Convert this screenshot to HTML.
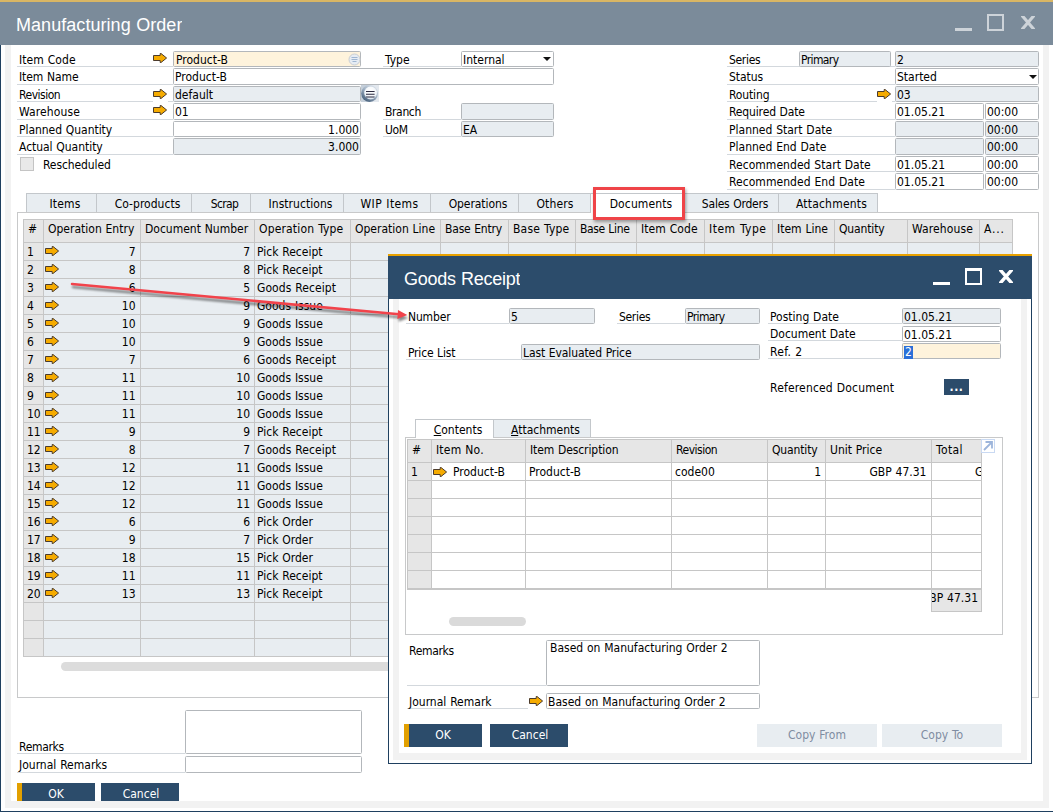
<!DOCTYPE html><html><head><meta charset="utf-8"><title>Manufacturing Order</title><style>
*{box-sizing:border-box;margin:0;padding:0}
html,body{width:1053px;height:812px;overflow:hidden;background:#fff}
body{position:relative;font-family:"DejaVu Sans Condensed","Liberation Sans",sans-serif;font-size:12px;color:#000;word-spacing:0.4px}
.a{position:absolute;white-space:nowrap;overflow:hidden}
.t{position:absolute;z-index:2;white-space:nowrap;line-height:16px;height:16px;padding-top:1px;height:17px}
.f{position:absolute;white-space:nowrap;border:1px solid #b3b7bb;border-radius:1.5px;line-height:14px;padding:1px 1px 0 1px;background:#fff}
.d{background:#e8edf1}
.y{background:#fef3dc}
.r{text-align:right}
.u{position:absolute;height:1px;background:#d3d8dd}
.tab{position:absolute;top:193px;height:19px;line-height:20px;padding-left:7px;text-align:center;background:#e8edf1;border:1px solid #c3c7cb;border-bottom:none;white-space:nowrap}
.btn{position:absolute;background:#2c4c6b;color:#fff;text-align:center;line-height:18px;height:18px;white-space:nowrap;overflow:hidden;padding-top:2px}
.gold{background:linear-gradient(to right,#e2a000 5px,#2c4c6b 5px)}
.hc{position:absolute;background:#e6e6e6;border-right:1px solid #c6c6c6;border-bottom:1px solid #c6c6c6;white-space:nowrap;overflow:hidden;padding-left:4px}
.c{position:absolute;border-right:1px solid #c6c6c6;border-bottom:1px solid #c6c6c6;white-space:nowrap;overflow:hidden;line-height:17px;height:18px;padding-top:1px}
svg{position:absolute;overflow:visible}
.ttl{font-family:"Liberation Sans",sans-serif;font-size:18px;line-height:24px;color:#fff}
</style></head><body>
<div class="a" style="left:0px;top:0px;width:1053px;height:2px;background:#d9b664;"></div>
<div class="a" style="left:0px;top:2px;width:1053px;height:43px;background:#7b8b9a;"></div>
<div class="a ttl" style="left:16px;top:13px;letter-spacing:0.05px">Manufacturing Order</div>
<div class="a" style="left:955px;top:28px;width:17px;height:3px;background:#cdd3d9;"></div>
<div class="a" style="left:987px;top:14px;width:17px;height:17px;border:2px solid #cdd3d9"></div>
<svg style="left:1020.5px;top:16px;overflow:hidden" width="14" height="13" viewBox="0 0 14 13"><path d="M0.5 -1L13.5 14M13.5 -1L0.5 14" stroke="#cdd3d9" stroke-width="3.2" fill="none"/></svg>
<div class="a" style="left:0px;top:45px;width:1px;height:767px;background:#1f4060;"></div>
<div class="a" style="left:0px;top:811px;width:1053px;height:1px;background:#1f4060;"></div>
<div class="a" style="left:5px;top:45px;width:6px;height:763px;background:#f2f2f2;"></div>
<div class="a" style="left:1043px;top:45px;width:6px;height:763px;background:#f2f2f2;"></div>
<div class="a" style="left:5px;top:801px;width:1044px;height:7px;background:#f2f2f2;"></div>
<div class="t" style="left:19px;top:51px;letter-spacing:0.07px;">Item Code</div>
<div class="u" style="left:17px;top:66px;width:156px"></div>
<div class="t" style="left:19px;top:68px;letter-spacing:-0.08px;">Item Name</div>
<div class="u" style="left:17px;top:84px;width:156px"></div>
<div class="t" style="left:19px;top:86px;letter-spacing:-0.48px;">Revision</div>
<div class="u" style="left:17px;top:101px;width:156px"></div>
<div class="t" style="left:19px;top:103px;letter-spacing:0.11px;">Warehouse</div>
<div class="u" style="left:17px;top:119px;width:156px"></div>
<div class="t" style="left:19px;top:121px;letter-spacing:-0.04px;">Planned Quantity</div>
<div class="u" style="left:17px;top:136px;width:156px"></div>
<div class="t" style="left:19px;top:138px;letter-spacing:-0.04px;">Actual Quantity</div>
<div class="u" style="left:17px;top:154px;width:156px"></div>
<div class="f y" style="left:173px;top:51px;width:188px;height:16px;padding-left:2px">Product-B</div>
<div class="f " style="left:173px;top:68px;width:381px;height:17px;">Product-B</div>
<div class="f d" style="left:173px;top:86px;width:188px;height:16px;">default</div>
<div class="f " style="left:173px;top:103px;width:188px;height:17px;">01</div>
<div class="f r" style="left:173px;top:121px;width:188px;height:16px;">1.000</div>
<div class="f d r" style="left:173px;top:138px;width:188px;height:17px;">3.000</div>
<svg style="left:153px;top:53px" width="14" height="10" viewBox="0 0 14 10"><path d="M0.5 2.5H7.2V0.5H8L13.6 5L8 9.5H7.2V7.5H0.5Z" fill="#f5ab00" stroke="#4b3b2c" stroke-width="1" stroke-linejoin="miter"/></svg>
<svg style="left:153px;top:89px" width="14" height="10" viewBox="0 0 14 10"><path d="M0.5 2.5H7.2V0.5H8L13.6 5L8 9.5H7.2V7.5H0.5Z" fill="#f5ab00" stroke="#4b3b2c" stroke-width="1" stroke-linejoin="miter"/></svg>
<svg style="left:153px;top:105px" width="14" height="10" viewBox="0 0 14 10"><path d="M0.5 2.5H7.2V0.5H8L13.6 5L8 9.5H7.2V7.5H0.5Z" fill="#f5ab00" stroke="#4b3b2c" stroke-width="1" stroke-linejoin="miter"/></svg>
<div class="a" style="left:153px;top:101px;width:15px;height:1px;background:#fff;"></div>
<svg style="left:347.5px;top:52.5px" width="13" height="13" viewBox="0 0 13 13"><circle cx="6.5" cy="6.5" r="5.5" fill="#e6ecf3" stroke="#c9cdd2"/><path d="M3.5 4.5H9.5M3.5 6.5H9.5M4.5 8.5H8.5" stroke="#9fb6d2" stroke-width="1"/></svg>
<svg style="left:361px;top:85px" width="18" height="17" viewBox="0 0 18 17"><defs><linearGradient id="g1" x1="0.8" y1="0" x2="0.15" y2="1"><stop offset="0" stop-color="#dfe6ee"/><stop offset="0.45" stop-color="#9fb0c3"/><stop offset="1" stop-color="#38536f"/></linearGradient><radialGradient id="g2" cx="0.5" cy="0.35" r="0.75"><stop offset="0" stop-color="#ffffff"/><stop offset="0.6" stop-color="#f2f6fa"/><stop offset="1" stop-color="#c3d2e2"/></radialGradient></defs><rect x="0" y="0" width="18" height="17" fill="#e3e8ee"/><path d="M0 0H8V17H0Z" fill="#c5cfda"/><circle cx="8.6" cy="8.5" r="8.4" fill="url(#g1)"/><circle cx="9.6" cy="8" r="6.4" fill="url(#g2)"/><path d="M5 6.5H13.6M5 9.3H13.6M5 12H13.6" stroke="#2b2a40" stroke-width="1.05"/></svg>
<div class="a" style="left:20px;top:157px;width:14px;height:14px;background:#e9e9e9;border:1px solid #c4c4c4"></div>
<div class="t" style="left:43px;top:156px;letter-spacing:-0.10px;">Rescheduled</div>
<div class="t" style="left:385px;top:51px;">Type</div>
<div class="u" style="left:383px;top:66px;width:78px"></div>
<div class="f " style="left:461px;top:51px;width:93px;height:16px;">Internal</div>
<svg style="left:543px;top:57px" width="8" height="4" viewBox="0 0 8 4"><path d="M0 0H8L4.0 4Z" fill="#111"/></svg>
<div class="t" style="left:385px;top:103px;letter-spacing:-0.36px;">Branch</div>
<div class="u" style="left:383px;top:119px;width:78px"></div>
<div class="f d" style="left:461px;top:103px;width:93px;height:17px;"></div>
<div class="t" style="left:385px;top:121px;letter-spacing:-0.41px;">UoM</div>
<div class="u" style="left:383px;top:136px;width:78px"></div>
<div class="f d" style="left:461px;top:121px;width:93px;height:16px;">EA</div>
<div class="t" style="left:729px;top:51px;letter-spacing:-0.32px;">Series</div>
<div class="u" style="left:727px;top:66px;width:168px"></div>
<div class="t" style="left:729px;top:68px;letter-spacing:-0.04px;">Status</div>
<div class="u" style="left:727px;top:84px;width:168px"></div>
<div class="t" style="left:729px;top:86px;letter-spacing:-0.14px;">Routing</div>
<div class="u" style="left:727px;top:101px;width:168px"></div>
<div class="t" style="left:729px;top:103px;letter-spacing:-0.14px;">Required Date</div>
<div class="u" style="left:727px;top:119px;width:168px"></div>
<div class="t" style="left:729px;top:121px;">Planned Start Date</div>
<div class="u" style="left:727px;top:136px;width:168px"></div>
<div class="t" style="left:729px;top:138px;">Planned End Date</div>
<div class="u" style="left:727px;top:154px;width:168px"></div>
<div class="t" style="left:729px;top:156px;letter-spacing:0.04px;">Recommended Start Date</div>
<div class="u" style="left:727px;top:171px;width:168px"></div>
<div class="t" style="left:729px;top:173px;letter-spacing:0.05px;">Recommended End Date</div>
<div class="u" style="left:727px;top:189px;width:168px"></div>
<div class="f d" style="left:799px;top:51px;width:92px;height:16px;letter-spacing:-0.60px;">Primary</div>
<div class="f d" style="left:895px;top:51px;width:144px;height:16px;">2</div>
<div class="f " style="left:895px;top:68px;width:144px;height:17px;">Started</div>
<svg style="left:1029px;top:75px" width="8" height="4" viewBox="0 0 8 4"><path d="M0 0H8L4.0 4Z" fill="#111"/></svg>
<div class="f d" style="left:895px;top:86px;width:144px;height:16px;">03</div>
<div class="a" style="left:877px;top:101px;width:15px;height:1px;background:#fff;"></div>
<svg style="left:877px;top:89px" width="14" height="10" viewBox="0 0 14 10"><path d="M0.5 2.5H7.2V0.5H8L13.6 5L8 9.5H7.2V7.5H0.5Z" fill="#f5ab00" stroke="#4b3b2c" stroke-width="1" stroke-linejoin="miter"/></svg>
<div class="f " style="left:895px;top:103px;width:89px;height:17px;">01.05.21</div>
<div class="f " style="left:985px;top:103px;width:54px;height:17px;">00:00</div>
<div class="f d" style="left:895px;top:121px;width:89px;height:16px;"></div>
<div class="f d" style="left:985px;top:121px;width:54px;height:16px;">00:00</div>
<div class="f d" style="left:895px;top:138px;width:89px;height:17px;"></div>
<div class="f d" style="left:985px;top:138px;width:54px;height:17px;">00:00</div>
<div class="f " style="left:895px;top:156px;width:89px;height:16px;">01.05.21</div>
<div class="f " style="left:985px;top:156px;width:54px;height:16px;">00:00</div>
<div class="f " style="left:895px;top:173px;width:89px;height:17px;">01.05.21</div>
<div class="f " style="left:985px;top:173px;width:54px;height:17px;">00:00</div>
<div class="a" style="left:17px;top:212px;width:1022px;height:486px;border:1px solid #c8c9ca;background:#fff"></div>
<div class="tab" style="left:26px;width:71px;letter-spacing:0.15px;">Items</div>
<div class="tab" style="left:96px;width:96px;letter-spacing:0.03px;">Co-products</div>
<div class="tab" style="left:191px;width:60px;letter-spacing:-0.60px;">Scrap</div>
<div class="tab" style="left:250px;width:94px;letter-spacing:0.04px;">Instructions</div>
<div class="tab" style="left:343px;width:88px;letter-spacing:0.41px;padding-left:5px;">WIP Items</div>
<div class="tab" style="left:430px;width:89px;letter-spacing:-0.06px;">Operations</div>
<div class="tab" style="left:518px;width:73px;letter-spacing:0.12px;padding-left:1px;">Others</div>
<div class="tab" style="left:590px;width:95px;letter-spacing:0.12px;background:#fff;height:20px;">Documents</div>
<div class="tab" style="left:684px;width:95px;letter-spacing:-0.21px;">Sales Orders</div>
<div class="tab" style="left:778px;width:100px;letter-spacing:0.21px;">Attachments</div>
<div class="a" style="left:23px;top:219px;width:990px;height:438px;background:#c6c6c6;"></div>
<div class="hc" style="left:24px;top:220px;width:20px;height:23px;line-height:18px;">#</div>
<div class="hc" style="left:44px;top:220px;width:97px;height:23px;line-height:18px;">Operation Entry</div>
<div class="hc" style="left:141px;top:220px;width:114px;height:23px;line-height:18px;">Document Number</div>
<div class="hc" style="left:255px;top:220px;width:96px;height:23px;line-height:18px;letter-spacing:0.16px;">Operation Type</div>
<div class="hc" style="left:351px;top:220px;width:90px;height:23px;line-height:18px;">Operation Line</div>
<div class="hc" style="left:441px;top:220px;width:68px;height:23px;line-height:18px;letter-spacing:-0.19px;">Base Entry</div>
<div class="hc" style="left:509px;top:220px;width:67px;height:23px;line-height:18px;letter-spacing:0.18px;">Base Type</div>
<div class="hc" style="left:576px;top:220px;width:61px;height:23px;line-height:18px;letter-spacing:-0.35px;">Base Line</div>
<div class="hc" style="left:637px;top:220px;width:68px;height:23px;line-height:18px;letter-spacing:0.07px;">Item Code</div>
<div class="hc" style="left:705px;top:220px;width:68px;height:23px;line-height:18px;letter-spacing:0.50px;">Item Type</div>
<div class="hc" style="left:773px;top:220px;width:62px;height:23px;line-height:18px;">Item Line</div>
<div class="hc" style="left:835px;top:220px;width:73px;height:23px;line-height:18px;letter-spacing:-0.15px;">Quantity</div>
<div class="hc" style="left:908px;top:220px;width:72px;height:23px;line-height:18px;letter-spacing:0.11px;">Warehouse</div>
<div class="hc" style="left:980px;top:220px;width:33px;height:23px;line-height:18px;letter-spacing:0.80px;">A...</div>
<div class="c" style="left:24px;top:243px;width:20px;background:#e6e6e6;padding-left:3px;">1</div>
<div class="c" style="left:44px;top:243px;width:97px;background:#e8edf1;text-align:right;padding-right:4.5px;">7</div>
<div class="c" style="left:141px;top:243px;width:114px;background:#e8edf1;text-align:right;padding-right:4px;">7</div>
<div class="c" style="left:255px;top:243px;width:96px;background:#e8edf1;padding-left:2px;">Pick Receipt</div>
<div class="c" style="left:351px;top:243px;width:90px;background:#e8edf1;"></div>
<div class="c" style="left:441px;top:243px;width:68px;background:#e8edf1;"></div>
<div class="c" style="left:509px;top:243px;width:67px;background:#e8edf1;"></div>
<div class="c" style="left:576px;top:243px;width:61px;background:#e8edf1;"></div>
<div class="c" style="left:637px;top:243px;width:68px;background:#e8edf1;"></div>
<div class="c" style="left:705px;top:243px;width:68px;background:#e8edf1;"></div>
<div class="c" style="left:773px;top:243px;width:62px;background:#e8edf1;"></div>
<div class="c" style="left:835px;top:243px;width:73px;background:#e8edf1;"></div>
<div class="c" style="left:908px;top:243px;width:72px;background:#e8edf1;"></div>
<div class="c" style="left:980px;top:243px;width:33px;background:#e8edf1;"></div>
<svg style="left:45px;top:246px" width="14" height="10" viewBox="0 0 14 10"><path d="M0.5 2.5H7.2V0.5H8L13.6 5L8 9.5H7.2V7.5H0.5Z" fill="#f5ab00" stroke="#4b3b2c" stroke-width="1" stroke-linejoin="miter"/></svg>
<div class="c" style="left:24px;top:261px;width:20px;background:#e6e6e6;padding-left:3px;">2</div>
<div class="c" style="left:44px;top:261px;width:97px;background:#e8edf1;text-align:right;padding-right:4.5px;">8</div>
<div class="c" style="left:141px;top:261px;width:114px;background:#e8edf1;text-align:right;padding-right:4px;">8</div>
<div class="c" style="left:255px;top:261px;width:96px;background:#e8edf1;padding-left:2px;">Pick Receipt</div>
<div class="c" style="left:351px;top:261px;width:90px;background:#e8edf1;"></div>
<div class="c" style="left:441px;top:261px;width:68px;background:#e8edf1;"></div>
<div class="c" style="left:509px;top:261px;width:67px;background:#e8edf1;"></div>
<div class="c" style="left:576px;top:261px;width:61px;background:#e8edf1;"></div>
<div class="c" style="left:637px;top:261px;width:68px;background:#e8edf1;"></div>
<div class="c" style="left:705px;top:261px;width:68px;background:#e8edf1;"></div>
<div class="c" style="left:773px;top:261px;width:62px;background:#e8edf1;"></div>
<div class="c" style="left:835px;top:261px;width:73px;background:#e8edf1;"></div>
<div class="c" style="left:908px;top:261px;width:72px;background:#e8edf1;"></div>
<div class="c" style="left:980px;top:261px;width:33px;background:#e8edf1;"></div>
<svg style="left:45px;top:264px" width="14" height="10" viewBox="0 0 14 10"><path d="M0.5 2.5H7.2V0.5H8L13.6 5L8 9.5H7.2V7.5H0.5Z" fill="#f5ab00" stroke="#4b3b2c" stroke-width="1" stroke-linejoin="miter"/></svg>
<div class="c" style="left:24px;top:279px;width:20px;background:#e6e6e6;padding-left:3px;">3</div>
<div class="c" style="left:44px;top:279px;width:97px;background:#e8edf1;text-align:right;padding-right:4.5px;">6</div>
<div class="c" style="left:141px;top:279px;width:114px;background:#e8edf1;text-align:right;padding-right:4px;">5</div>
<div class="c" style="left:255px;top:279px;width:96px;background:#e8edf1;padding-left:2px;letter-spacing:0.07px;">Goods Receipt</div>
<div class="c" style="left:351px;top:279px;width:90px;background:#e8edf1;"></div>
<div class="c" style="left:441px;top:279px;width:68px;background:#e8edf1;"></div>
<div class="c" style="left:509px;top:279px;width:67px;background:#e8edf1;"></div>
<div class="c" style="left:576px;top:279px;width:61px;background:#e8edf1;"></div>
<div class="c" style="left:637px;top:279px;width:68px;background:#e8edf1;"></div>
<div class="c" style="left:705px;top:279px;width:68px;background:#e8edf1;"></div>
<div class="c" style="left:773px;top:279px;width:62px;background:#e8edf1;"></div>
<div class="c" style="left:835px;top:279px;width:73px;background:#e8edf1;"></div>
<div class="c" style="left:908px;top:279px;width:72px;background:#e8edf1;"></div>
<div class="c" style="left:980px;top:279px;width:33px;background:#e8edf1;"></div>
<svg style="left:45px;top:282px" width="14" height="10" viewBox="0 0 14 10"><path d="M0.5 2.5H7.2V0.5H8L13.6 5L8 9.5H7.2V7.5H0.5Z" fill="#f5ab00" stroke="#4b3b2c" stroke-width="1" stroke-linejoin="miter"/></svg>
<div class="c" style="left:24px;top:297px;width:20px;background:#e6e6e6;padding-left:3px;">4</div>
<div class="c" style="left:44px;top:297px;width:97px;background:#e8edf1;text-align:right;padding-right:4.5px;">10</div>
<div class="c" style="left:141px;top:297px;width:114px;background:#e8edf1;text-align:right;padding-right:4px;">9</div>
<div class="c" style="left:255px;top:297px;width:96px;background:#e8edf1;padding-left:2px;">Goods Issue</div>
<div class="c" style="left:351px;top:297px;width:90px;background:#e8edf1;"></div>
<div class="c" style="left:441px;top:297px;width:68px;background:#e8edf1;"></div>
<div class="c" style="left:509px;top:297px;width:67px;background:#e8edf1;"></div>
<div class="c" style="left:576px;top:297px;width:61px;background:#e8edf1;"></div>
<div class="c" style="left:637px;top:297px;width:68px;background:#e8edf1;"></div>
<div class="c" style="left:705px;top:297px;width:68px;background:#e8edf1;"></div>
<div class="c" style="left:773px;top:297px;width:62px;background:#e8edf1;"></div>
<div class="c" style="left:835px;top:297px;width:73px;background:#e8edf1;"></div>
<div class="c" style="left:908px;top:297px;width:72px;background:#e8edf1;"></div>
<div class="c" style="left:980px;top:297px;width:33px;background:#e8edf1;"></div>
<svg style="left:45px;top:300px" width="14" height="10" viewBox="0 0 14 10"><path d="M0.5 2.5H7.2V0.5H8L13.6 5L8 9.5H7.2V7.5H0.5Z" fill="#f5ab00" stroke="#4b3b2c" stroke-width="1" stroke-linejoin="miter"/></svg>
<div class="c" style="left:24px;top:315px;width:20px;background:#e6e6e6;padding-left:3px;">5</div>
<div class="c" style="left:44px;top:315px;width:97px;background:#e8edf1;text-align:right;padding-right:4.5px;">10</div>
<div class="c" style="left:141px;top:315px;width:114px;background:#e8edf1;text-align:right;padding-right:4px;">9</div>
<div class="c" style="left:255px;top:315px;width:96px;background:#e8edf1;padding-left:2px;">Goods Issue</div>
<div class="c" style="left:351px;top:315px;width:90px;background:#e8edf1;"></div>
<div class="c" style="left:441px;top:315px;width:68px;background:#e8edf1;"></div>
<div class="c" style="left:509px;top:315px;width:67px;background:#e8edf1;"></div>
<div class="c" style="left:576px;top:315px;width:61px;background:#e8edf1;"></div>
<div class="c" style="left:637px;top:315px;width:68px;background:#e8edf1;"></div>
<div class="c" style="left:705px;top:315px;width:68px;background:#e8edf1;"></div>
<div class="c" style="left:773px;top:315px;width:62px;background:#e8edf1;"></div>
<div class="c" style="left:835px;top:315px;width:73px;background:#e8edf1;"></div>
<div class="c" style="left:908px;top:315px;width:72px;background:#e8edf1;"></div>
<div class="c" style="left:980px;top:315px;width:33px;background:#e8edf1;"></div>
<svg style="left:45px;top:318px" width="14" height="10" viewBox="0 0 14 10"><path d="M0.5 2.5H7.2V0.5H8L13.6 5L8 9.5H7.2V7.5H0.5Z" fill="#f5ab00" stroke="#4b3b2c" stroke-width="1" stroke-linejoin="miter"/></svg>
<div class="c" style="left:24px;top:333px;width:20px;background:#e6e6e6;padding-left:3px;">6</div>
<div class="c" style="left:44px;top:333px;width:97px;background:#e8edf1;text-align:right;padding-right:4.5px;">10</div>
<div class="c" style="left:141px;top:333px;width:114px;background:#e8edf1;text-align:right;padding-right:4px;">9</div>
<div class="c" style="left:255px;top:333px;width:96px;background:#e8edf1;padding-left:2px;">Goods Issue</div>
<div class="c" style="left:351px;top:333px;width:90px;background:#e8edf1;"></div>
<div class="c" style="left:441px;top:333px;width:68px;background:#e8edf1;"></div>
<div class="c" style="left:509px;top:333px;width:67px;background:#e8edf1;"></div>
<div class="c" style="left:576px;top:333px;width:61px;background:#e8edf1;"></div>
<div class="c" style="left:637px;top:333px;width:68px;background:#e8edf1;"></div>
<div class="c" style="left:705px;top:333px;width:68px;background:#e8edf1;"></div>
<div class="c" style="left:773px;top:333px;width:62px;background:#e8edf1;"></div>
<div class="c" style="left:835px;top:333px;width:73px;background:#e8edf1;"></div>
<div class="c" style="left:908px;top:333px;width:72px;background:#e8edf1;"></div>
<div class="c" style="left:980px;top:333px;width:33px;background:#e8edf1;"></div>
<svg style="left:45px;top:336px" width="14" height="10" viewBox="0 0 14 10"><path d="M0.5 2.5H7.2V0.5H8L13.6 5L8 9.5H7.2V7.5H0.5Z" fill="#f5ab00" stroke="#4b3b2c" stroke-width="1" stroke-linejoin="miter"/></svg>
<div class="c" style="left:24px;top:351px;width:20px;background:#e6e6e6;padding-left:3px;">7</div>
<div class="c" style="left:44px;top:351px;width:97px;background:#e8edf1;text-align:right;padding-right:4.5px;">7</div>
<div class="c" style="left:141px;top:351px;width:114px;background:#e8edf1;text-align:right;padding-right:4px;">6</div>
<div class="c" style="left:255px;top:351px;width:96px;background:#e8edf1;padding-left:2px;letter-spacing:0.07px;">Goods Receipt</div>
<div class="c" style="left:351px;top:351px;width:90px;background:#e8edf1;"></div>
<div class="c" style="left:441px;top:351px;width:68px;background:#e8edf1;"></div>
<div class="c" style="left:509px;top:351px;width:67px;background:#e8edf1;"></div>
<div class="c" style="left:576px;top:351px;width:61px;background:#e8edf1;"></div>
<div class="c" style="left:637px;top:351px;width:68px;background:#e8edf1;"></div>
<div class="c" style="left:705px;top:351px;width:68px;background:#e8edf1;"></div>
<div class="c" style="left:773px;top:351px;width:62px;background:#e8edf1;"></div>
<div class="c" style="left:835px;top:351px;width:73px;background:#e8edf1;"></div>
<div class="c" style="left:908px;top:351px;width:72px;background:#e8edf1;"></div>
<div class="c" style="left:980px;top:351px;width:33px;background:#e8edf1;"></div>
<svg style="left:45px;top:354px" width="14" height="10" viewBox="0 0 14 10"><path d="M0.5 2.5H7.2V0.5H8L13.6 5L8 9.5H7.2V7.5H0.5Z" fill="#f5ab00" stroke="#4b3b2c" stroke-width="1" stroke-linejoin="miter"/></svg>
<div class="c" style="left:24px;top:369px;width:20px;background:#e6e6e6;padding-left:3px;">8</div>
<div class="c" style="left:44px;top:369px;width:97px;background:#e8edf1;text-align:right;padding-right:4.5px;">11</div>
<div class="c" style="left:141px;top:369px;width:114px;background:#e8edf1;text-align:right;padding-right:4px;">10</div>
<div class="c" style="left:255px;top:369px;width:96px;background:#e8edf1;padding-left:2px;">Goods Issue</div>
<div class="c" style="left:351px;top:369px;width:90px;background:#e8edf1;"></div>
<div class="c" style="left:441px;top:369px;width:68px;background:#e8edf1;"></div>
<div class="c" style="left:509px;top:369px;width:67px;background:#e8edf1;"></div>
<div class="c" style="left:576px;top:369px;width:61px;background:#e8edf1;"></div>
<div class="c" style="left:637px;top:369px;width:68px;background:#e8edf1;"></div>
<div class="c" style="left:705px;top:369px;width:68px;background:#e8edf1;"></div>
<div class="c" style="left:773px;top:369px;width:62px;background:#e8edf1;"></div>
<div class="c" style="left:835px;top:369px;width:73px;background:#e8edf1;"></div>
<div class="c" style="left:908px;top:369px;width:72px;background:#e8edf1;"></div>
<div class="c" style="left:980px;top:369px;width:33px;background:#e8edf1;"></div>
<svg style="left:45px;top:372px" width="14" height="10" viewBox="0 0 14 10"><path d="M0.5 2.5H7.2V0.5H8L13.6 5L8 9.5H7.2V7.5H0.5Z" fill="#f5ab00" stroke="#4b3b2c" stroke-width="1" stroke-linejoin="miter"/></svg>
<div class="c" style="left:24px;top:387px;width:20px;background:#e6e6e6;padding-left:3px;">9</div>
<div class="c" style="left:44px;top:387px;width:97px;background:#e8edf1;text-align:right;padding-right:4.5px;">11</div>
<div class="c" style="left:141px;top:387px;width:114px;background:#e8edf1;text-align:right;padding-right:4px;">10</div>
<div class="c" style="left:255px;top:387px;width:96px;background:#e8edf1;padding-left:2px;">Goods Issue</div>
<div class="c" style="left:351px;top:387px;width:90px;background:#e8edf1;"></div>
<div class="c" style="left:441px;top:387px;width:68px;background:#e8edf1;"></div>
<div class="c" style="left:509px;top:387px;width:67px;background:#e8edf1;"></div>
<div class="c" style="left:576px;top:387px;width:61px;background:#e8edf1;"></div>
<div class="c" style="left:637px;top:387px;width:68px;background:#e8edf1;"></div>
<div class="c" style="left:705px;top:387px;width:68px;background:#e8edf1;"></div>
<div class="c" style="left:773px;top:387px;width:62px;background:#e8edf1;"></div>
<div class="c" style="left:835px;top:387px;width:73px;background:#e8edf1;"></div>
<div class="c" style="left:908px;top:387px;width:72px;background:#e8edf1;"></div>
<div class="c" style="left:980px;top:387px;width:33px;background:#e8edf1;"></div>
<svg style="left:45px;top:390px" width="14" height="10" viewBox="0 0 14 10"><path d="M0.5 2.5H7.2V0.5H8L13.6 5L8 9.5H7.2V7.5H0.5Z" fill="#f5ab00" stroke="#4b3b2c" stroke-width="1" stroke-linejoin="miter"/></svg>
<div class="c" style="left:24px;top:405px;width:20px;background:#e6e6e6;padding-left:3px;">10</div>
<div class="c" style="left:44px;top:405px;width:97px;background:#e8edf1;text-align:right;padding-right:4.5px;">11</div>
<div class="c" style="left:141px;top:405px;width:114px;background:#e8edf1;text-align:right;padding-right:4px;">10</div>
<div class="c" style="left:255px;top:405px;width:96px;background:#e8edf1;padding-left:2px;">Goods Issue</div>
<div class="c" style="left:351px;top:405px;width:90px;background:#e8edf1;"></div>
<div class="c" style="left:441px;top:405px;width:68px;background:#e8edf1;"></div>
<div class="c" style="left:509px;top:405px;width:67px;background:#e8edf1;"></div>
<div class="c" style="left:576px;top:405px;width:61px;background:#e8edf1;"></div>
<div class="c" style="left:637px;top:405px;width:68px;background:#e8edf1;"></div>
<div class="c" style="left:705px;top:405px;width:68px;background:#e8edf1;"></div>
<div class="c" style="left:773px;top:405px;width:62px;background:#e8edf1;"></div>
<div class="c" style="left:835px;top:405px;width:73px;background:#e8edf1;"></div>
<div class="c" style="left:908px;top:405px;width:72px;background:#e8edf1;"></div>
<div class="c" style="left:980px;top:405px;width:33px;background:#e8edf1;"></div>
<svg style="left:45px;top:408px" width="14" height="10" viewBox="0 0 14 10"><path d="M0.5 2.5H7.2V0.5H8L13.6 5L8 9.5H7.2V7.5H0.5Z" fill="#f5ab00" stroke="#4b3b2c" stroke-width="1" stroke-linejoin="miter"/></svg>
<div class="c" style="left:24px;top:423px;width:20px;background:#e6e6e6;padding-left:3px;">11</div>
<div class="c" style="left:44px;top:423px;width:97px;background:#e8edf1;text-align:right;padding-right:4.5px;">9</div>
<div class="c" style="left:141px;top:423px;width:114px;background:#e8edf1;text-align:right;padding-right:4px;">9</div>
<div class="c" style="left:255px;top:423px;width:96px;background:#e8edf1;padding-left:2px;">Pick Receipt</div>
<div class="c" style="left:351px;top:423px;width:90px;background:#e8edf1;"></div>
<div class="c" style="left:441px;top:423px;width:68px;background:#e8edf1;"></div>
<div class="c" style="left:509px;top:423px;width:67px;background:#e8edf1;"></div>
<div class="c" style="left:576px;top:423px;width:61px;background:#e8edf1;"></div>
<div class="c" style="left:637px;top:423px;width:68px;background:#e8edf1;"></div>
<div class="c" style="left:705px;top:423px;width:68px;background:#e8edf1;"></div>
<div class="c" style="left:773px;top:423px;width:62px;background:#e8edf1;"></div>
<div class="c" style="left:835px;top:423px;width:73px;background:#e8edf1;"></div>
<div class="c" style="left:908px;top:423px;width:72px;background:#e8edf1;"></div>
<div class="c" style="left:980px;top:423px;width:33px;background:#e8edf1;"></div>
<svg style="left:45px;top:426px" width="14" height="10" viewBox="0 0 14 10"><path d="M0.5 2.5H7.2V0.5H8L13.6 5L8 9.5H7.2V7.5H0.5Z" fill="#f5ab00" stroke="#4b3b2c" stroke-width="1" stroke-linejoin="miter"/></svg>
<div class="c" style="left:24px;top:441px;width:20px;background:#e6e6e6;padding-left:3px;">12</div>
<div class="c" style="left:44px;top:441px;width:97px;background:#e8edf1;text-align:right;padding-right:4.5px;">8</div>
<div class="c" style="left:141px;top:441px;width:114px;background:#e8edf1;text-align:right;padding-right:4px;">7</div>
<div class="c" style="left:255px;top:441px;width:96px;background:#e8edf1;padding-left:2px;letter-spacing:0.07px;">Goods Receipt</div>
<div class="c" style="left:351px;top:441px;width:90px;background:#e8edf1;"></div>
<div class="c" style="left:441px;top:441px;width:68px;background:#e8edf1;"></div>
<div class="c" style="left:509px;top:441px;width:67px;background:#e8edf1;"></div>
<div class="c" style="left:576px;top:441px;width:61px;background:#e8edf1;"></div>
<div class="c" style="left:637px;top:441px;width:68px;background:#e8edf1;"></div>
<div class="c" style="left:705px;top:441px;width:68px;background:#e8edf1;"></div>
<div class="c" style="left:773px;top:441px;width:62px;background:#e8edf1;"></div>
<div class="c" style="left:835px;top:441px;width:73px;background:#e8edf1;"></div>
<div class="c" style="left:908px;top:441px;width:72px;background:#e8edf1;"></div>
<div class="c" style="left:980px;top:441px;width:33px;background:#e8edf1;"></div>
<svg style="left:45px;top:444px" width="14" height="10" viewBox="0 0 14 10"><path d="M0.5 2.5H7.2V0.5H8L13.6 5L8 9.5H7.2V7.5H0.5Z" fill="#f5ab00" stroke="#4b3b2c" stroke-width="1" stroke-linejoin="miter"/></svg>
<div class="c" style="left:24px;top:459px;width:20px;background:#e6e6e6;padding-left:3px;">13</div>
<div class="c" style="left:44px;top:459px;width:97px;background:#e8edf1;text-align:right;padding-right:4.5px;">12</div>
<div class="c" style="left:141px;top:459px;width:114px;background:#e8edf1;text-align:right;padding-right:4px;">11</div>
<div class="c" style="left:255px;top:459px;width:96px;background:#e8edf1;padding-left:2px;">Goods Issue</div>
<div class="c" style="left:351px;top:459px;width:90px;background:#e8edf1;"></div>
<div class="c" style="left:441px;top:459px;width:68px;background:#e8edf1;"></div>
<div class="c" style="left:509px;top:459px;width:67px;background:#e8edf1;"></div>
<div class="c" style="left:576px;top:459px;width:61px;background:#e8edf1;"></div>
<div class="c" style="left:637px;top:459px;width:68px;background:#e8edf1;"></div>
<div class="c" style="left:705px;top:459px;width:68px;background:#e8edf1;"></div>
<div class="c" style="left:773px;top:459px;width:62px;background:#e8edf1;"></div>
<div class="c" style="left:835px;top:459px;width:73px;background:#e8edf1;"></div>
<div class="c" style="left:908px;top:459px;width:72px;background:#e8edf1;"></div>
<div class="c" style="left:980px;top:459px;width:33px;background:#e8edf1;"></div>
<svg style="left:45px;top:462px" width="14" height="10" viewBox="0 0 14 10"><path d="M0.5 2.5H7.2V0.5H8L13.6 5L8 9.5H7.2V7.5H0.5Z" fill="#f5ab00" stroke="#4b3b2c" stroke-width="1" stroke-linejoin="miter"/></svg>
<div class="c" style="left:24px;top:477px;width:20px;background:#e6e6e6;padding-left:3px;">14</div>
<div class="c" style="left:44px;top:477px;width:97px;background:#e8edf1;text-align:right;padding-right:4.5px;">12</div>
<div class="c" style="left:141px;top:477px;width:114px;background:#e8edf1;text-align:right;padding-right:4px;">11</div>
<div class="c" style="left:255px;top:477px;width:96px;background:#e8edf1;padding-left:2px;">Goods Issue</div>
<div class="c" style="left:351px;top:477px;width:90px;background:#e8edf1;"></div>
<div class="c" style="left:441px;top:477px;width:68px;background:#e8edf1;"></div>
<div class="c" style="left:509px;top:477px;width:67px;background:#e8edf1;"></div>
<div class="c" style="left:576px;top:477px;width:61px;background:#e8edf1;"></div>
<div class="c" style="left:637px;top:477px;width:68px;background:#e8edf1;"></div>
<div class="c" style="left:705px;top:477px;width:68px;background:#e8edf1;"></div>
<div class="c" style="left:773px;top:477px;width:62px;background:#e8edf1;"></div>
<div class="c" style="left:835px;top:477px;width:73px;background:#e8edf1;"></div>
<div class="c" style="left:908px;top:477px;width:72px;background:#e8edf1;"></div>
<div class="c" style="left:980px;top:477px;width:33px;background:#e8edf1;"></div>
<svg style="left:45px;top:480px" width="14" height="10" viewBox="0 0 14 10"><path d="M0.5 2.5H7.2V0.5H8L13.6 5L8 9.5H7.2V7.5H0.5Z" fill="#f5ab00" stroke="#4b3b2c" stroke-width="1" stroke-linejoin="miter"/></svg>
<div class="c" style="left:24px;top:495px;width:20px;background:#e6e6e6;padding-left:3px;">15</div>
<div class="c" style="left:44px;top:495px;width:97px;background:#e8edf1;text-align:right;padding-right:4.5px;">12</div>
<div class="c" style="left:141px;top:495px;width:114px;background:#e8edf1;text-align:right;padding-right:4px;">11</div>
<div class="c" style="left:255px;top:495px;width:96px;background:#e8edf1;padding-left:2px;">Goods Issue</div>
<div class="c" style="left:351px;top:495px;width:90px;background:#e8edf1;"></div>
<div class="c" style="left:441px;top:495px;width:68px;background:#e8edf1;"></div>
<div class="c" style="left:509px;top:495px;width:67px;background:#e8edf1;"></div>
<div class="c" style="left:576px;top:495px;width:61px;background:#e8edf1;"></div>
<div class="c" style="left:637px;top:495px;width:68px;background:#e8edf1;"></div>
<div class="c" style="left:705px;top:495px;width:68px;background:#e8edf1;"></div>
<div class="c" style="left:773px;top:495px;width:62px;background:#e8edf1;"></div>
<div class="c" style="left:835px;top:495px;width:73px;background:#e8edf1;"></div>
<div class="c" style="left:908px;top:495px;width:72px;background:#e8edf1;"></div>
<div class="c" style="left:980px;top:495px;width:33px;background:#e8edf1;"></div>
<svg style="left:45px;top:498px" width="14" height="10" viewBox="0 0 14 10"><path d="M0.5 2.5H7.2V0.5H8L13.6 5L8 9.5H7.2V7.5H0.5Z" fill="#f5ab00" stroke="#4b3b2c" stroke-width="1" stroke-linejoin="miter"/></svg>
<div class="c" style="left:24px;top:513px;width:20px;background:#e6e6e6;padding-left:3px;">16</div>
<div class="c" style="left:44px;top:513px;width:97px;background:#e8edf1;text-align:right;padding-right:4.5px;">6</div>
<div class="c" style="left:141px;top:513px;width:114px;background:#e8edf1;text-align:right;padding-right:4px;">6</div>
<div class="c" style="left:255px;top:513px;width:96px;background:#e8edf1;padding-left:2px;">Pick Order</div>
<div class="c" style="left:351px;top:513px;width:90px;background:#e8edf1;"></div>
<div class="c" style="left:441px;top:513px;width:68px;background:#e8edf1;"></div>
<div class="c" style="left:509px;top:513px;width:67px;background:#e8edf1;"></div>
<div class="c" style="left:576px;top:513px;width:61px;background:#e8edf1;"></div>
<div class="c" style="left:637px;top:513px;width:68px;background:#e8edf1;"></div>
<div class="c" style="left:705px;top:513px;width:68px;background:#e8edf1;"></div>
<div class="c" style="left:773px;top:513px;width:62px;background:#e8edf1;"></div>
<div class="c" style="left:835px;top:513px;width:73px;background:#e8edf1;"></div>
<div class="c" style="left:908px;top:513px;width:72px;background:#e8edf1;"></div>
<div class="c" style="left:980px;top:513px;width:33px;background:#e8edf1;"></div>
<svg style="left:45px;top:516px" width="14" height="10" viewBox="0 0 14 10"><path d="M0.5 2.5H7.2V0.5H8L13.6 5L8 9.5H7.2V7.5H0.5Z" fill="#f5ab00" stroke="#4b3b2c" stroke-width="1" stroke-linejoin="miter"/></svg>
<div class="c" style="left:24px;top:531px;width:20px;background:#e6e6e6;padding-left:3px;">17</div>
<div class="c" style="left:44px;top:531px;width:97px;background:#e8edf1;text-align:right;padding-right:4.5px;">9</div>
<div class="c" style="left:141px;top:531px;width:114px;background:#e8edf1;text-align:right;padding-right:4px;">7</div>
<div class="c" style="left:255px;top:531px;width:96px;background:#e8edf1;padding-left:2px;">Pick Order</div>
<div class="c" style="left:351px;top:531px;width:90px;background:#e8edf1;"></div>
<div class="c" style="left:441px;top:531px;width:68px;background:#e8edf1;"></div>
<div class="c" style="left:509px;top:531px;width:67px;background:#e8edf1;"></div>
<div class="c" style="left:576px;top:531px;width:61px;background:#e8edf1;"></div>
<div class="c" style="left:637px;top:531px;width:68px;background:#e8edf1;"></div>
<div class="c" style="left:705px;top:531px;width:68px;background:#e8edf1;"></div>
<div class="c" style="left:773px;top:531px;width:62px;background:#e8edf1;"></div>
<div class="c" style="left:835px;top:531px;width:73px;background:#e8edf1;"></div>
<div class="c" style="left:908px;top:531px;width:72px;background:#e8edf1;"></div>
<div class="c" style="left:980px;top:531px;width:33px;background:#e8edf1;"></div>
<svg style="left:45px;top:534px" width="14" height="10" viewBox="0 0 14 10"><path d="M0.5 2.5H7.2V0.5H8L13.6 5L8 9.5H7.2V7.5H0.5Z" fill="#f5ab00" stroke="#4b3b2c" stroke-width="1" stroke-linejoin="miter"/></svg>
<div class="c" style="left:24px;top:549px;width:20px;background:#e6e6e6;padding-left:3px;">18</div>
<div class="c" style="left:44px;top:549px;width:97px;background:#e8edf1;text-align:right;padding-right:4.5px;">18</div>
<div class="c" style="left:141px;top:549px;width:114px;background:#e8edf1;text-align:right;padding-right:4px;">15</div>
<div class="c" style="left:255px;top:549px;width:96px;background:#e8edf1;padding-left:2px;">Pick Order</div>
<div class="c" style="left:351px;top:549px;width:90px;background:#e8edf1;"></div>
<div class="c" style="left:441px;top:549px;width:68px;background:#e8edf1;"></div>
<div class="c" style="left:509px;top:549px;width:67px;background:#e8edf1;"></div>
<div class="c" style="left:576px;top:549px;width:61px;background:#e8edf1;"></div>
<div class="c" style="left:637px;top:549px;width:68px;background:#e8edf1;"></div>
<div class="c" style="left:705px;top:549px;width:68px;background:#e8edf1;"></div>
<div class="c" style="left:773px;top:549px;width:62px;background:#e8edf1;"></div>
<div class="c" style="left:835px;top:549px;width:73px;background:#e8edf1;"></div>
<div class="c" style="left:908px;top:549px;width:72px;background:#e8edf1;"></div>
<div class="c" style="left:980px;top:549px;width:33px;background:#e8edf1;"></div>
<svg style="left:45px;top:552px" width="14" height="10" viewBox="0 0 14 10"><path d="M0.5 2.5H7.2V0.5H8L13.6 5L8 9.5H7.2V7.5H0.5Z" fill="#f5ab00" stroke="#4b3b2c" stroke-width="1" stroke-linejoin="miter"/></svg>
<div class="c" style="left:24px;top:567px;width:20px;background:#e6e6e6;padding-left:3px;">19</div>
<div class="c" style="left:44px;top:567px;width:97px;background:#e8edf1;text-align:right;padding-right:4.5px;">11</div>
<div class="c" style="left:141px;top:567px;width:114px;background:#e8edf1;text-align:right;padding-right:4px;">11</div>
<div class="c" style="left:255px;top:567px;width:96px;background:#e8edf1;padding-left:2px;">Pick Receipt</div>
<div class="c" style="left:351px;top:567px;width:90px;background:#e8edf1;"></div>
<div class="c" style="left:441px;top:567px;width:68px;background:#e8edf1;"></div>
<div class="c" style="left:509px;top:567px;width:67px;background:#e8edf1;"></div>
<div class="c" style="left:576px;top:567px;width:61px;background:#e8edf1;"></div>
<div class="c" style="left:637px;top:567px;width:68px;background:#e8edf1;"></div>
<div class="c" style="left:705px;top:567px;width:68px;background:#e8edf1;"></div>
<div class="c" style="left:773px;top:567px;width:62px;background:#e8edf1;"></div>
<div class="c" style="left:835px;top:567px;width:73px;background:#e8edf1;"></div>
<div class="c" style="left:908px;top:567px;width:72px;background:#e8edf1;"></div>
<div class="c" style="left:980px;top:567px;width:33px;background:#e8edf1;"></div>
<svg style="left:45px;top:570px" width="14" height="10" viewBox="0 0 14 10"><path d="M0.5 2.5H7.2V0.5H8L13.6 5L8 9.5H7.2V7.5H0.5Z" fill="#f5ab00" stroke="#4b3b2c" stroke-width="1" stroke-linejoin="miter"/></svg>
<div class="c" style="left:24px;top:585px;width:20px;background:#e6e6e6;padding-left:3px;">20</div>
<div class="c" style="left:44px;top:585px;width:97px;background:#e8edf1;text-align:right;padding-right:4.5px;">13</div>
<div class="c" style="left:141px;top:585px;width:114px;background:#e8edf1;text-align:right;padding-right:4px;">13</div>
<div class="c" style="left:255px;top:585px;width:96px;background:#e8edf1;padding-left:2px;">Pick Receipt</div>
<div class="c" style="left:351px;top:585px;width:90px;background:#e8edf1;"></div>
<div class="c" style="left:441px;top:585px;width:68px;background:#e8edf1;"></div>
<div class="c" style="left:509px;top:585px;width:67px;background:#e8edf1;"></div>
<div class="c" style="left:576px;top:585px;width:61px;background:#e8edf1;"></div>
<div class="c" style="left:637px;top:585px;width:68px;background:#e8edf1;"></div>
<div class="c" style="left:705px;top:585px;width:68px;background:#e8edf1;"></div>
<div class="c" style="left:773px;top:585px;width:62px;background:#e8edf1;"></div>
<div class="c" style="left:835px;top:585px;width:73px;background:#e8edf1;"></div>
<div class="c" style="left:908px;top:585px;width:72px;background:#e8edf1;"></div>
<div class="c" style="left:980px;top:585px;width:33px;background:#e8edf1;"></div>
<svg style="left:45px;top:588px" width="14" height="10" viewBox="0 0 14 10"><path d="M0.5 2.5H7.2V0.5H8L13.6 5L8 9.5H7.2V7.5H0.5Z" fill="#f5ab00" stroke="#4b3b2c" stroke-width="1" stroke-linejoin="miter"/></svg>
<div class="c" style="left:24px;top:603px;width:20px;background:#e6e6e6;"></div>
<div class="c" style="left:44px;top:603px;width:97px;background:#e8edf1;"></div>
<div class="c" style="left:141px;top:603px;width:114px;background:#e8edf1;"></div>
<div class="c" style="left:255px;top:603px;width:96px;background:#e8edf1;"></div>
<div class="c" style="left:351px;top:603px;width:90px;background:#e8edf1;"></div>
<div class="c" style="left:441px;top:603px;width:68px;background:#e8edf1;"></div>
<div class="c" style="left:509px;top:603px;width:67px;background:#e8edf1;"></div>
<div class="c" style="left:576px;top:603px;width:61px;background:#e8edf1;"></div>
<div class="c" style="left:637px;top:603px;width:68px;background:#e8edf1;"></div>
<div class="c" style="left:705px;top:603px;width:68px;background:#e8edf1;"></div>
<div class="c" style="left:773px;top:603px;width:62px;background:#e8edf1;"></div>
<div class="c" style="left:835px;top:603px;width:73px;background:#e8edf1;"></div>
<div class="c" style="left:908px;top:603px;width:72px;background:#e8edf1;"></div>
<div class="c" style="left:980px;top:603px;width:33px;background:#e8edf1;"></div>
<div class="c" style="left:24px;top:621px;width:20px;background:#e6e6e6;"></div>
<div class="c" style="left:44px;top:621px;width:97px;background:#e8edf1;"></div>
<div class="c" style="left:141px;top:621px;width:114px;background:#e8edf1;"></div>
<div class="c" style="left:255px;top:621px;width:96px;background:#e8edf1;"></div>
<div class="c" style="left:351px;top:621px;width:90px;background:#e8edf1;"></div>
<div class="c" style="left:441px;top:621px;width:68px;background:#e8edf1;"></div>
<div class="c" style="left:509px;top:621px;width:67px;background:#e8edf1;"></div>
<div class="c" style="left:576px;top:621px;width:61px;background:#e8edf1;"></div>
<div class="c" style="left:637px;top:621px;width:68px;background:#e8edf1;"></div>
<div class="c" style="left:705px;top:621px;width:68px;background:#e8edf1;"></div>
<div class="c" style="left:773px;top:621px;width:62px;background:#e8edf1;"></div>
<div class="c" style="left:835px;top:621px;width:73px;background:#e8edf1;"></div>
<div class="c" style="left:908px;top:621px;width:72px;background:#e8edf1;"></div>
<div class="c" style="left:980px;top:621px;width:33px;background:#e8edf1;"></div>
<div class="c" style="left:24px;top:639px;width:20px;background:#e6e6e6;"></div>
<div class="c" style="left:44px;top:639px;width:97px;background:#e8edf1;"></div>
<div class="c" style="left:141px;top:639px;width:114px;background:#e8edf1;"></div>
<div class="c" style="left:255px;top:639px;width:96px;background:#e8edf1;"></div>
<div class="c" style="left:351px;top:639px;width:90px;background:#e8edf1;"></div>
<div class="c" style="left:441px;top:639px;width:68px;background:#e8edf1;"></div>
<div class="c" style="left:509px;top:639px;width:67px;background:#e8edf1;"></div>
<div class="c" style="left:576px;top:639px;width:61px;background:#e8edf1;"></div>
<div class="c" style="left:637px;top:639px;width:68px;background:#e8edf1;"></div>
<div class="c" style="left:705px;top:639px;width:68px;background:#e8edf1;"></div>
<div class="c" style="left:773px;top:639px;width:62px;background:#e8edf1;"></div>
<div class="c" style="left:835px;top:639px;width:73px;background:#e8edf1;"></div>
<div class="c" style="left:908px;top:639px;width:72px;background:#e8edf1;"></div>
<div class="c" style="left:980px;top:639px;width:33px;background:#e8edf1;"></div>
<div class="a" style="left:61px;top:662px;width:900px;height:9px;border-radius:5px;background:#dcdcdc"></div>
<div class="t" style="left:19px;top:738px;letter-spacing:-0.33px;">Remarks</div>
<div class="u" style="left:17px;top:753px;width:168px"></div>
<div class="f " style="left:185px;top:710px;width:177px;height:44px;"></div>
<div class="t" style="left:19px;top:756px;">Journal Remarks</div>
<div class="u" style="left:17px;top:772px;width:168px"></div>
<div class="f " style="left:185px;top:756px;width:177px;height:17px;"></div>
<div class="btn gold" style="left:17px;top:783px;width:78px">OK</div>
<div class="btn" style="left:101px;top:783px;width:78px;padding-left:2px">Cancel</div>
<div class="a" style="left:593px;top:187px;width:92px;height:33px;border:3px solid #ef4448;box-shadow:1px 2px 3px rgba(0,0,0,.35);overflow:visible"></div>
<div class="a" style="left:388px;top:254px;width:644px;height:510px;background:#fff;border:1px solid #1f4060;border-top:none"></div>
<div class="a" style="left:388px;top:254px;width:644px;height:2px;background:#e8a100;"></div>
<div class="a" style="left:388px;top:256px;width:644px;height:43px;background:#2c4c6b;"></div>
<div class="a ttl" style="left:404px;top:267px;letter-spacing:-0.25px">Goods Receipt</div>
<div class="a" style="left:933px;top:282px;width:17px;height:3px;background:#fff;"></div>
<div class="a" style="left:965px;top:268px;width:17px;height:17px;border:2px solid #fff;border-top-width:3px"></div>
<svg style="left:998.5px;top:270px;overflow:hidden" width="14" height="13" viewBox="0 0 14 13"><path d="M0.5 -1L13.5 14M13.5 -1L0.5 14" stroke="#fff" stroke-width="3.4" fill="none"/></svg>
<div class="a" style="left:393px;top:299px;width:6px;height:461px;background:#f2f2f2;"></div>
<div class="a" style="left:1021px;top:299px;width:6px;height:461px;background:#f2f2f2;"></div>
<div class="a" style="left:393px;top:753px;width:634px;height:7px;background:#f2f2f2;"></div>
<div class="t" style="left:408px;top:308px;letter-spacing:-0.15px;">Number</div>
<div class="u" style="left:406px;top:323px;width:103px"></div>
<div class="f d" style="left:509px;top:308px;width:86px;height:16px;">5</div>
<div class="t" style="left:619px;top:308px;letter-spacing:-0.32px;">Series</div>
<div class="u" style="left:617px;top:323px;width:68px"></div>
<div class="f d" style="left:685px;top:308px;width:75px;height:16px;letter-spacing:-0.60px;">Primary</div>
<div class="t" style="left:770px;top:308px;">Posting Date</div>
<div class="u" style="left:768px;top:323px;width:134px"></div>
<div class="f d" style="left:902px;top:308px;width:99px;height:16px;">01.05.21</div>
<div class="t" style="left:770px;top:325px;">Document Date</div>
<div class="u" style="left:768px;top:340px;width:134px"></div>
<div class="f " style="left:902px;top:326px;width:99px;height:16px;">01.05.21</div>
<div class="t" style="left:770px;top:343px;letter-spacing:0.29px;">Ref. 2</div>
<div class="u" style="left:768px;top:358px;width:134px"></div>
<div class="f y" style="left:902px;top:343px;width:99px;height:16px;"><span style="background:#2a6fd8;color:#fff;display:inline-block;height:13px;line-height:13px;margin-top:0px;padding:0 1px">2</span></div>
<div class="t" style="left:408px;top:344px;letter-spacing:-0.18px;">Price List</div>
<div class="u" style="left:406px;top:359px;width:115px"></div>
<div class="f d" style="left:521px;top:344px;width:239px;height:16px;letter-spacing:-0.10px;">Last Evaluated Price</div>
<div class="t" style="left:770px;top:379px;letter-spacing:0.17px;">Referenced Document</div>
<div class="btn" style="left:944px;top:379px;width:25px;height:16px;line-height:12px;letter-spacing:0.5px;font-weight:bold">...</div>
<div class="a" style="left:405px;top:437px;width:598px;height:198px;border:1px solid #c8c9ca;background:#fff"></div>
<div class="tab" style="left:415px;top:419px;width:79px;height:19px;background:#fff"><u>C</u>ontents</div>
<div class="tab" style="left:493px;top:419px;width:98px;height:18px"><u>A</u>ttachments</div>
<div class="a" style="left:407px;top:439px;width:575px;height:151px;background:#c6c6c6;"></div>
<div class="hc" style="left:408px;top:440px;width:24px;height:23px;line-height:21px;">#</div>
<div class="hc" style="left:432px;top:440px;width:94px;height:23px;line-height:21px;letter-spacing:0.19px;">Item No.</div>
<div class="hc" style="left:526px;top:440px;width:146px;height:23px;line-height:21px;letter-spacing:-0.09px;">Item Description</div>
<div class="hc" style="left:672px;top:440px;width:96px;height:23px;line-height:21px;letter-spacing:-0.48px;">Revision</div>
<div class="hc" style="left:768px;top:440px;width:58px;height:23px;line-height:21px;letter-spacing:-0.15px;">Quantity</div>
<div class="hc" style="left:826px;top:440px;width:106px;height:23px;line-height:21px;">Unit Price</div>
<div class="hc" style="left:932px;top:440px;width:50px;height:23px;line-height:21px;letter-spacing:0.37px;">Total</div>
<div class="c" style="left:408px;top:463px;width:24px;background:#e6e6e6;padding-left:3px;">1</div>
<div class="c" style="left:432px;top:463px;width:94px;background:#fff;padding-left:21px;">Product-B</div>
<div class="c" style="left:526px;top:463px;width:146px;background:#fff;padding-left:3px;">Product-B</div>
<div class="c" style="left:672px;top:463px;width:96px;background:#fff;padding-left:3px;">code00</div>
<div class="c" style="left:768px;top:463px;width:58px;background:#fff;text-align:right;padding-right:4px;">1</div>
<div class="c" style="left:826px;top:463px;width:106px;background:#fff;text-align:right;padding-right:4.5px;">GBP 47.31</div>
<div class="c" style="left:932px;top:463px;width:50px;background:#fff;padding-left:43px;">G</div>
<div class="c" style="left:408px;top:481px;width:24px;background:#e6e6e6;padding-left:3px;"></div>
<div class="c" style="left:432px;top:481px;width:94px;background:#fff;padding-left:3px;"></div>
<div class="c" style="left:526px;top:481px;width:146px;background:#fff;padding-left:3px;"></div>
<div class="c" style="left:672px;top:481px;width:96px;background:#fff;padding-left:3px;"></div>
<div class="c" style="left:768px;top:481px;width:58px;background:#fff;text-align:right;padding-right:4px;"></div>
<div class="c" style="left:826px;top:481px;width:106px;background:#fff;text-align:right;padding-right:4.5px;"></div>
<div class="c" style="left:932px;top:481px;width:50px;background:#fff;padding-left:43px;"></div>
<div class="c" style="left:408px;top:499px;width:24px;background:#e6e6e6;padding-left:3px;"></div>
<div class="c" style="left:432px;top:499px;width:94px;background:#fff;padding-left:3px;"></div>
<div class="c" style="left:526px;top:499px;width:146px;background:#fff;padding-left:3px;"></div>
<div class="c" style="left:672px;top:499px;width:96px;background:#fff;padding-left:3px;"></div>
<div class="c" style="left:768px;top:499px;width:58px;background:#fff;text-align:right;padding-right:4px;"></div>
<div class="c" style="left:826px;top:499px;width:106px;background:#fff;text-align:right;padding-right:4.5px;"></div>
<div class="c" style="left:932px;top:499px;width:50px;background:#fff;padding-left:43px;"></div>
<div class="c" style="left:408px;top:517px;width:24px;background:#e6e6e6;padding-left:3px;"></div>
<div class="c" style="left:432px;top:517px;width:94px;background:#fff;padding-left:3px;"></div>
<div class="c" style="left:526px;top:517px;width:146px;background:#fff;padding-left:3px;"></div>
<div class="c" style="left:672px;top:517px;width:96px;background:#fff;padding-left:3px;"></div>
<div class="c" style="left:768px;top:517px;width:58px;background:#fff;text-align:right;padding-right:4px;"></div>
<div class="c" style="left:826px;top:517px;width:106px;background:#fff;text-align:right;padding-right:4.5px;"></div>
<div class="c" style="left:932px;top:517px;width:50px;background:#fff;padding-left:43px;"></div>
<div class="c" style="left:408px;top:535px;width:24px;background:#e6e6e6;padding-left:3px;"></div>
<div class="c" style="left:432px;top:535px;width:94px;background:#fff;padding-left:3px;"></div>
<div class="c" style="left:526px;top:535px;width:146px;background:#fff;padding-left:3px;"></div>
<div class="c" style="left:672px;top:535px;width:96px;background:#fff;padding-left:3px;"></div>
<div class="c" style="left:768px;top:535px;width:58px;background:#fff;text-align:right;padding-right:4px;"></div>
<div class="c" style="left:826px;top:535px;width:106px;background:#fff;text-align:right;padding-right:4.5px;"></div>
<div class="c" style="left:932px;top:535px;width:50px;background:#fff;padding-left:43px;"></div>
<div class="c" style="left:408px;top:553px;width:24px;background:#e6e6e6;padding-left:3px;"></div>
<div class="c" style="left:432px;top:553px;width:94px;background:#fff;padding-left:3px;"></div>
<div class="c" style="left:526px;top:553px;width:146px;background:#fff;padding-left:3px;"></div>
<div class="c" style="left:672px;top:553px;width:96px;background:#fff;padding-left:3px;"></div>
<div class="c" style="left:768px;top:553px;width:58px;background:#fff;text-align:right;padding-right:4px;"></div>
<div class="c" style="left:826px;top:553px;width:106px;background:#fff;text-align:right;padding-right:4.5px;"></div>
<div class="c" style="left:932px;top:553px;width:50px;background:#fff;padding-left:43px;"></div>
<div class="c" style="left:408px;top:571px;width:24px;background:#e6e6e6;padding-left:3px;"></div>
<div class="c" style="left:432px;top:571px;width:94px;background:#fff;padding-left:3px;"></div>
<div class="c" style="left:526px;top:571px;width:146px;background:#fff;padding-left:3px;"></div>
<div class="c" style="left:672px;top:571px;width:96px;background:#fff;padding-left:3px;"></div>
<div class="c" style="left:768px;top:571px;width:58px;background:#fff;text-align:right;padding-right:4px;"></div>
<div class="c" style="left:826px;top:571px;width:106px;background:#fff;text-align:right;padding-right:4.5px;"></div>
<div class="c" style="left:932px;top:571px;width:50px;background:#fff;padding-left:43px;"></div>
<svg style="left:433px;top:467px" width="14" height="10" viewBox="0 0 14 10"><path d="M0.5 2.5H7.2V0.5H8L13.6 5L8 9.5H7.2V7.5H0.5Z" fill="#f5ab00" stroke="#4b3b2c" stroke-width="1" stroke-linejoin="miter"/></svg>
<div class="c" style="left:931px;top:590px;width:51px;height:22px;line-height:15px;background:#e6e6e6;border-left:1px solid #c6c6c6;text-align:right;padding-right:3px"><span style="margin-left:-20px">BP 47.31</span></div>
<svg style="left:981px;top:439px" width="14" height="14" viewBox="0 0 14 14"><rect x="0.5" y="0.5" width="13" height="13" fill="#fff" stroke="#c9d9f2"/><path d="M3 11L10.5 3.5M4.5 3H11V9.5" stroke="#9db5db" stroke-width="1.8" fill="none"/></svg>
<div class="a" style="left:449px;top:617px;width:77px;height:9px;border-radius:5px;background:#dadada"></div>
<div class="t" style="left:409px;top:642px;letter-spacing:-0.33px;">Remarks</div>
<div class="u" style="left:407px;top:685px;width:139px"></div>
<div class="f " style="left:546px;top:640px;width:214px;height:46px;padding-left:3px;padding-top:0">Based on Manufacturing Order 2</div>
<div class="t" style="left:409px;top:693px;">Journal Remark</div>
<div class="u" style="left:407px;top:708px;width:121px"></div>
<svg style="left:529px;top:696px" width="14" height="10" viewBox="0 0 14 10"><path d="M0.5 2.5H7.2V0.5H8L13.6 5L8 9.5H7.2V7.5H0.5Z" fill="#f5ab00" stroke="#4b3b2c" stroke-width="1" stroke-linejoin="miter"/></svg>
<div class="f " style="left:546px;top:693px;width:214px;height:16px;">Based on Manufacturing Order 2</div>
<div class="btn gold" style="left:404px;top:724px;width:78px;height:23px;line-height:22px;padding-top:0">OK</div>
<div class="btn" style="left:490px;top:724px;width:78px;height:23px;line-height:22px;padding-top:0;padding-left:2px">Cancel</div>
<div class="btn" style="left:757px;top:724px;width:120px;height:23px;line-height:22px;background:#e8edf1;color:#7f8ca1;padding-top:0">Copy From</div>
<div class="btn" style="left:882px;top:724px;width:120px;height:23px;line-height:22px;background:#e8edf1;color:#7f8ca1;padding-top:0">Copy To</div>
<svg style="left:0;top:0;z-index:5" width="1053" height="812" viewBox="0 0 1053 812"><defs><filter id="sh" x="-5%" y="-50%" width="110%" height="300%"><feGaussianBlur stdDeviation="1.3"/></filter></defs><g filter="url(#sh)" opacity="0.45" transform="translate(1,3)"><path d="M72 284L399 314.3" stroke="#000" stroke-width="2.6" stroke-linecap="round"/><path d="M407.3 315L398 310.2L397.6 318.8Z" fill="#000"/></g><path d="M72 284L399 314.3" stroke="#f1434b" stroke-width="2.6" stroke-linecap="round"/><path d="M407.3 315L398 310L397.4 319Z" fill="#f1434b"/></svg>
</body></html>
